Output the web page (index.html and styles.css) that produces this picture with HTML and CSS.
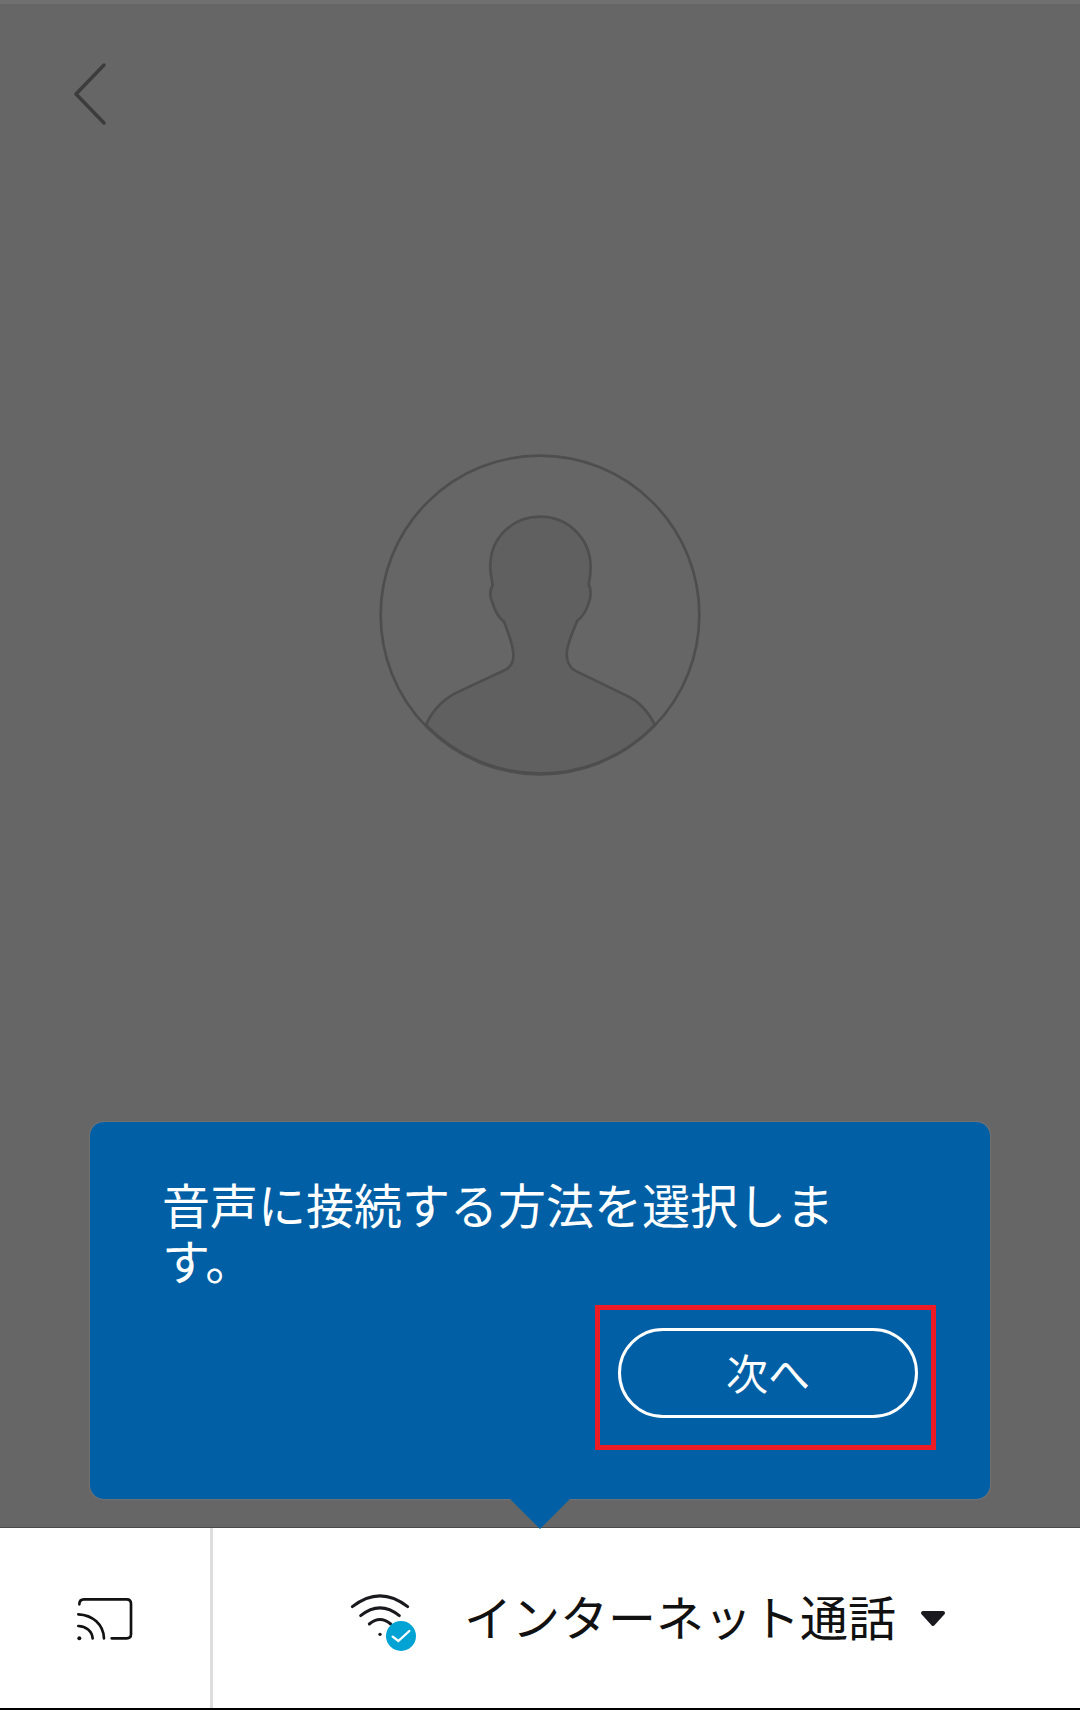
FILE: index.html
```html
<!doctype html>
<html lang="ja">
<head>
    <meta charset="UTF-8">
    <title>音声に接続する方法を選択します。</title>
    <link rel="stylesheet" href="styles.css">
</head>
<body>
<div class="screen">
    <div class="topStrip"></div>
    <div class="dim">
        <svg class="backIcon" viewBox="0 0 36 66">
            <path d="M32 3 L4 32 L32 61"></path>
        </svg>
        <svg class="avatar" viewBox="0 0 1200 1110">
            <path class="avatarBust" d="M258 885 C275 845 300 815 345 790 L495 720 C515 710 522 695 520 670 C518 640 505 610 492 575 C470 560 460 530 453 505 C448 485 452 475 458 465 C452 435 450 420 451 400 C455 320 520 260 600 260 C680 260 750 320 752 410 C752 430 750 445 746 463 C752 475 754 490 749 510 C742 535 730 560 712 572 C698 605 682 640 680 670 C680 695 688 712 705 722 L860 797 C900 815 925 845 945 885 A478 478 0 0 1 258 885 Z"></path>
            <circle class="avatarRing" cx="600" cy="555" r="478"></circle>
        </svg>
        <div class="tip">
            <p class="tipText">音声に接続する方法を選択します。</p>
            <div class="highlight">
                <button class="nextBtn">次へ</button>
            </div>
            <div class="tipArrow"></div>
        </div>
    </div>
    <div class="bottomBar">
        <div class="castCell">
            <svg class="castIcon" viewBox="0 0 270 210">
                <path d="M58 70 Q58 55 72 55 L200 55 Q213 55 213 68 L213 160 Q213 172 200 172 L155 172"></path>
                <path d="M55 100 C98 102 130 130 132 172"></path>
                <path d="M55 135 C78 136 96 150 98 172"></path>
                <circle class="castDot" cx="58" cy="172" r="6"></circle>
            </svg>
        </div>
        <div class="audioCell">
            <svg class="wifiIcon" viewBox="0 0 360 270">
                <path d="M97 110 Q180 45 263 110"></path>
                <path d="M122 137 Q180 90 238 137"></path>
                <path d="M148 162 Q180 135 212 162"></path>
                <circle class="wifiDot" cx="180" cy="193" r="5"></circle>
                <circle class="wifiBadge" cx="243" cy="198" r="45"></circle>
                <path class="wifiCheck" d="M218 200 L235 213 L268 183"></path>
            </svg>
            <span class="audioLabel">インターネット通話</span>
            <svg class="caret" viewBox="0 0 26 17">
                <path d="M3 3 H23 L13 14 Z"></path>
            </svg>
        </div>
    </div>
</div>
</body>
</html>
```

FILE: styles.css
```css
* {
    margin: 0;
    padding: 0;
    box-sizing: border-box;
}
body {
    font-family: "Noto Sans CJK JP", "Liberation Sans", sans-serif;
    background: #fff;
}
.screen {
    width: 1080px;
    height: 1710px;
    display: flex;
    flex-direction: column;
    overflow: hidden;
}
.topStrip {
    height: 4px;
    background: #707070;
}

/* dimmed call screen */
.dim {
    flex: 1;
    display: flex;
    flex-direction: column;
    background: #666;
    border-bottom: 1px solid #4a4a4a;
}
.backIcon {
    width: 36px;
    height: 66px;
    margin: 58px 0 0 72px;
    flex: none;
}
.backIcon path {
    fill: none;
    stroke: #3c3c3c;
    stroke-width: 3.5;
    stroke-linecap: round;
    stroke-linejoin: round;
}
.avatar {
    width: 400px;
    height: 370px;
    margin: 302px 0 0 340px;
    flex: none;
}
.avatarBust {
    fill: #606060;
    stroke: #4e4e4e;
    stroke-width: 8;
}
.avatarRing {
    fill: none;
    stroke: #4e4e4e;
    stroke-width: 8;
}

/* tooltip card */
.tip {
    position: relative;
    width: 900px;
    margin: auto 0 28px 90px;
    padding: 53px 54px 49px 72px;
    display: flex;
    flex-direction: column;
    background: #005fa5;
    border-radius: 14px;
    box-shadow: 0 0 2px #8e8e8e;
}
.tipText {
    width: 700px;
    font-size: 48px;
    font-weight: 400;
    line-height: 56px;
    color: #fff;
}
.highlight {
    align-self: flex-end;
    width: 341px;
    height: 145px;
    margin-top: 18px;
    padding: 18px 13px 27px 18px;
    border: 5px solid #ed1c24;
}
.nextBtn {
    display: block;
    width: 300px;
    height: 90px;
    padding-bottom: 4px;
    font-family: inherit;
    font-size: 42px;
    font-weight: 400;
    color: #fff;
    background: transparent;
    border: 3px solid #fff;
    border-radius: 45px;
}
.tipArrow {
    position: absolute;
    left: 420px;
    top: 100%;
    width: 60px;
    height: 30px;
    background: #005fa5;
    clip-path: polygon(0 0, 100% 0, 50% 100%);
}

/* bottom bar */
.bottomBar {
    height: 182px;
    flex: none;
    display: flex;
    background: #fff;
    border-bottom: 2px solid #000;
}
.castCell {
    width: 213px;
    flex: none;
    display: flex;
    align-items: center;
    padding-left: 60px;
    border-right: 3px solid #ddd;
}
.castIcon {
    width: 90px;
    height: 70px;
    margin-top: -5px;
}
.castIcon path {
    fill: none;
    stroke: #111;
    stroke-width: 8;
    stroke-linecap: round;
}
.castDot {
    fill: #111;
}
.audioCell {
    flex: 1;
    display: flex;
    align-items: center;
    padding-left: 107px;
}
.wifiIcon {
    width: 120px;
    height: 90px;
    flex: none;
    margin-top: -6px;
}
.wifiIcon path {
    fill: none;
    stroke: #1a1a1e;
    stroke-width: 9;
    stroke-linecap: round;
}
.wifiIcon .wifiCheck {
    stroke: #fff;
    stroke-width: 7;
}
.wifiDot {
    fill: #1a1a1e;
}
.wifiBadge {
    fill: #00a3d4;
}
.audioLabel {
    margin: -6px 0 0 24px;
    font-size: 48px;
    font-weight: 400;
    line-height: 56px;
    color: #111;
    white-space: nowrap;
}
.caret {
    width: 26px;
    height: 17px;
    margin: 0 0 0 24px;
    flex: none;
}
.caret path {
    fill: #1a1a1e;
    stroke: #1a1a1e;
    stroke-width: 4;
    stroke-linejoin: round;
}
```
